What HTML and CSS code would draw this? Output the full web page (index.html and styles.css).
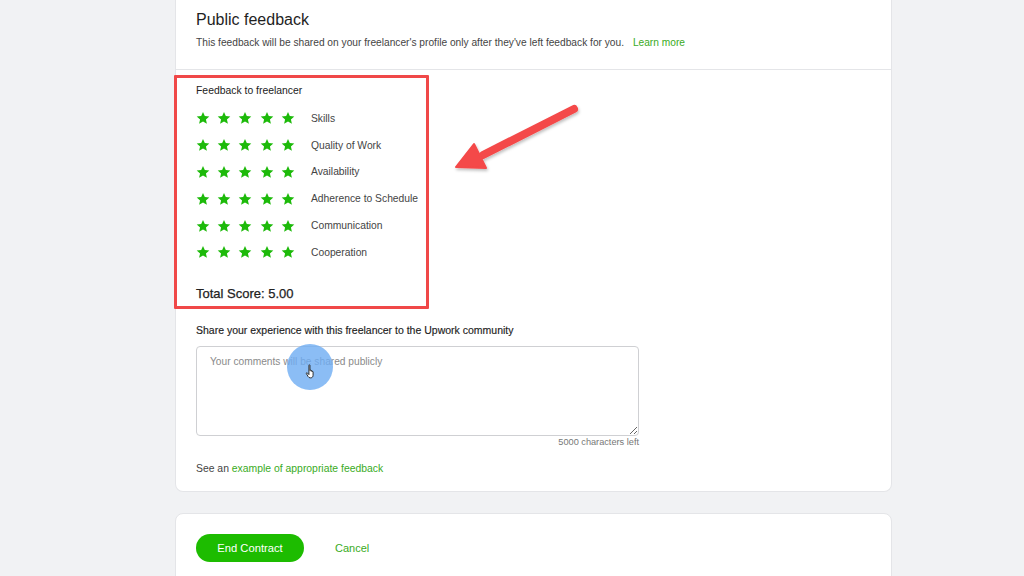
FILE: index.html
```html
<!DOCTYPE html>
<html>
  <head>
    <title>End contract</title>
    <link rel="stylesheet" href="styles.css">
  </head>
  <body>
    <svg width="0" height="0" class="defs">
      <symbol id="star" viewBox="0 0 24 24">
        <path d="M12 1.5l3.1 7.1 7.7.7-5.8 5.1 1.7 7.6L12 18l-6.7 4 1.7-7.6-5.8-5.1 7.7-.7z" />
      </symbol>
    </svg>

    <div class="page">
      <section class="card card-feedback">
        <div class="card-head">
          <h2 class="card-title">Public feedback</h2>
          <p class="card-sub">
            This feedback will be shared on your freelancer's profile only after they've left feedback for you.
            <a class="link" href="#">Learn more</a>
          </p>
        </div>

        <div class="card-body">
          <div class="ratings">
            <h3 class="ratings-title">Feedback to freelancer</h3>
            <div id="ratingList" class="rating-list"></div>
            <p class="total">Total Score: 5.00</p>
          </div>

          <label class="share-label" for="comments">Share your experience with this freelancer to the Upwork community</label>
          <textarea id="comments" class="comments" placeholder="Your comments will be shared publicly"></textarea>
          <p class="chars-left">5000 characters left</p>
          <p class="see-example">See an <a class="link" href="#">example of appropriate feedback</a></p>

          <!-- annotation: red box + arrow -->
          <div class="highlight-box"></div>
          <svg class="arrow" width="140" height="80" viewBox="0 0 140 80">
            <defs>
              <filter id="shadow" x="-20%" y="-20%" width="140%" height="140%">
                <feDropShadow dx="1" dy="2" stdDeviation="1.5" flood-color="#000" flood-opacity="0.25" />
              </filter>
            </defs>
            <g filter="url(#shadow)" fill="#f44848" stroke="#f44848">
              <line x1="131" y1="12" x2="40" y2="58" stroke-width="8" stroke-linecap="round" />
              <polygon points="13,70 31,47 43,71" stroke-width="2" stroke-linejoin="round" />
            </g>
          </svg>

          <!-- click marker -->
          <div class="click-dot">
            <svg class="hand" width="12" height="15" viewBox="0 0 10 13">
              <path d="M3.2 1.2c0-.6.9-.6.9 0v4.4c0-.6.9-.6.9 0v.6c0-.6.9-.6.9 0v.6c0-.6.9-.6.9 0v3c0 1.2-.8 2.2-2 2.2H4.3c-.8 0-1.4-.5-1.8-1.1L1 8.3c-.3-.6.4-1 .8-.6l1.4 1.5z" fill="#fff" stroke="#222" stroke-width="0.8" stroke-linejoin="round" />
            </svg>
          </div>
        </div>
      </section>

      <section class="card card-actions">
        <button class="btn-primary">End Contract</button>
        <a class="link btn-link" href="#">Cancel</a>
      </section>
    </div>

    <script>
      const categories = [
        "Skills",
        "Quality of Work",
        "Availability",
        "Adherence to Schedule",
        "Communication",
        "Cooperation",
      ];

      const starSvg = '<svg class="star" viewBox="0 0 24 24"><use href="#star"></use></svg>';

      document.getElementById("ratingList").innerHTML = categories
        .map(
          (name) => `
          <div class="rating-row">
            <div class="stars">${starSvg.repeat(5)}</div>
            <span class="rating-name">${name}</span>
          </div>
        `
        )
        .join("");
    </script>
  </body>
</html>
```

FILE: styles.css
```css
body {
  font-family: "Liberation Sans", Arial, sans-serif;
  margin: 0;
  background: #f1f2f4;
  color: #222;
}

.defs {
  position: absolute;
}

.page {
  padding: 0 132px 0 175px;
}

.card {
  background: white;
  border: 1px solid #e4e5e8;
  border-radius: 8px;
}

.card-feedback {
  border-top: none;
  border-radius: 0 0 8px 8px;
}

.card-head {
  padding: 10px 20px 0;
  height: 59px;
  border-bottom: 1px solid #e4e5e8;
}

.card-title {
  margin: 0;
  font-size: 16px;
  font-weight: normal;
  line-height: 20px;
  color: #1f1f1f;
}

.card-sub {
  margin: 6px 0 0;
  font-size: 10.2px;
  line-height: 14px;
  color: #444;
}

.card-sub .link {
  margin-left: 6px;
}

.link {
  color: #3aab24;
  text-decoration: none;
}

.card-body {
  position: relative;
  padding: 14px 20px 15px;
}

.ratings-title {
  margin: 0;
  font-size: 10.4px;
  font-weight: normal;
  line-height: 14px;
  color: #222;
}

.rating-list {
  margin-top: 7px;
}

.rating-row {
  display: flex;
  align-items: center;
  height: 26.8px;
}

.stars {
  display: flex;
  gap: 7.2px;
  width: 115px;
}

.star {
  width: 14px;
  height: 14px;
  fill: #1dba0a;
}

.rating-name {
  font-size: 10.3px;
  color: #444;
}

.total {
  margin: 19px 0 0;
  font-size: 13px;
  line-height: 18px;
  color: #222;
  -webkit-text-stroke: 0.25px #222;
}

.share-label {
  display: block;
  margin-top: 20px;
  font-size: 10.5px;
  line-height: 14px;
  color: #222;
  -webkit-text-stroke: 0.15px #222;
}

.comments {
  display: block;
  box-sizing: border-box;
  width: 443px;
  height: 90px;
  margin-top: 9px;
  padding: 9px 13px;
  border: 1px solid #cfd0d3;
  border-radius: 4px;
  font-family: inherit;
  font-size: 10.2px;
  resize: vertical;
}

.comments::placeholder {
  color: #8a8a8a;
}

.chars-left {
  width: 443px;
  margin: 0;
  text-align: right;
  font-size: 9.2px;
  line-height: 12px;
  color: #777;
}

.see-example {
  margin: 14px 0 0;
  font-size: 10.4px;
  line-height: 14px;
  color: #444;
}

.highlight-box {
  position: absolute;
  left: -2px;
  top: 5px;
  width: 249px;
  height: 228px;
  border: 3px solid #f04848;
  border-radius: 1px;
}

.arrow {
  position: absolute;
  left: 267px;
  top: 27px;
}

.click-dot {
  position: absolute;
  left: 111px;
  top: 274px;
  width: 46px;
  height: 46px;
  border-radius: 50%;
  background: rgba(110, 172, 242, 0.8);
  display: flex;
  align-items: center;
  justify-content: center;
}

.hand {
  margin: 8px 0 0 2px;
}

.card-actions {
  display: flex;
  align-items: flex-start;
  gap: 31px;
  margin-top: 21px;
  height: 80px;
  padding: 20px 20px 0;
  box-sizing: border-box;
}

.btn-primary {
  width: 108px;
  height: 28px;
  border: none;
  border-radius: 14px;
  background: #1dbc00;
  color: white;
  font-family: inherit;
  font-size: 11.2px;
  cursor: pointer;
}

.btn-link {
  font-size: 11px;
  line-height: 28px;
}
```
